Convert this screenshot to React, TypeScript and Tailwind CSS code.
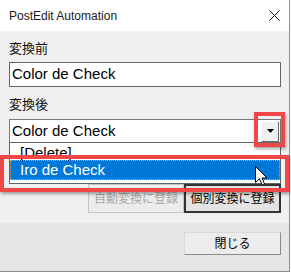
const ui = '"Liberation Sans", "Noto Sans CJK JP", sans-serif';

function Cursor() {
  return (
    <svg width="13" height="21" viewBox="0 0 13 21" className="absolute left-[255px] top-[166px]">
      <path
        d="M0.5 0.5 L0.5 16.5 L4.5 12.8 L7.2 19.2 L9.6 18.2 L7 12 L12 12 Z"
        fill="white"
        stroke="black"
        strokeWidth="1"
        strokeLinejoin="miter"
      />
    </svg>
  );
}

export default function App() {
  return (
    <div className="h-[273px] w-[291px] overflow-hidden bg-white" style={{ fontFamily: ui }}>
      <div className="relative flex h-[272px] w-[290px] flex-col border-r border-b border-[#8c8c8c] bg-[#f0f0f0]">
        {/* title bar */}
        <div className="flex h-[31px] items-center justify-between bg-white pl-[9px] pr-[9px]">
          <span className="text-[12px] text-[#1a1a1a]">PostEdit Automation</span>
          <svg width="11" height="11" viewBox="0 0 11 11">
            <path d="M0.5 0.5 L10.5 10.5 M10.5 0.5 L0.5 10.5" stroke="#111" strokeWidth="1" />
          </svg>
        </div>

        <div className="flex flex-col pb-[10px] pl-[9px] pr-[8px]">
          <div className="mt-[9px] h-[18px] text-[13px] leading-[18px] text-[#111]">変換前</div>
          <div className="mt-[4px] flex h-[25px] w-[272px] items-center border border-[#646464] bg-white pl-[2px] text-[15px] text-black">
            Color de Check
          </div>

          <div className="mt-[9px] h-[18px] text-[13px] leading-[18px] text-[#111]">変換後</div>
          <div className="mt-[5px] flex h-[24px] w-[272px] items-center justify-between border border-[#7a7a7a] bg-white pl-[2px] pr-[1px] text-[15px] text-black">
            <span>Color de Check</span>
            <div className="flex h-[21px] w-[18px] items-center justify-center border border-t-white border-l-white border-r-[#696969] border-b-[#696969] bg-[#f0f0f0]">
              <svg width="7" height="4" viewBox="0 0 7 4">
                <path d="M0 0 H7 L3.5 4 Z" fill="black" />
              </svg>
            </div>
          </div>

          <div className="mt-[41px] flex justify-end">
            <div className="flex h-[29px] w-[96px] items-center justify-center border border-[#c6c6c6] bg-[#ececec] text-[12px] text-[#a6a6a6]">
              自動変換に登録
            </div>
            <div className="flex h-[29px] w-[97px] items-center justify-center border-2 border-[#333] bg-[#e4e4e4] text-[12px] text-black">
              個別変換に登録
            </div>
          </div>
        </div>

        <div className="flex flex-1 justify-end bg-[#e6e6e6] pr-[8px] pt-[9px]">
          <div className="flex h-[23px] w-[97px] items-center justify-center border border-t-[#d8d8d8] border-l-[#d8d8d8] border-r-[#8a8a8a] border-b-[#8a8a8a] bg-[#ececec] text-[12px] text-black">
            閉じる
          </div>
        </div>

        {/* dropdown list */}
        <div className="absolute left-[9px] top-[142px] h-[42px] w-[272px] border border-[#646464] bg-white text-[15px]">
          <div className="h-[17px] pl-[10px] pt-[1px] leading-[17px] text-black">[Delete]</div>
          <div className="flex h-[20px] items-center bg-[#0078d7] pl-[10px] text-white outline-1 outline-dotted outline-offset-[-1px] outline-[#e8a040]">
            Iro de Check
          </div>
        </div>

        {/* annotation boxes */}
        <div className="absolute left-0 top-[155px] h-[37px] w-[289px] border-4 border-[#f04848] shadow-[1px_2px_3px_rgba(0,0,0,0.35)]" />
        <div className="absolute left-[254px] top-[112px] h-[35px] w-[31px] border-4 border-[#f04848] shadow-[1px_2px_3px_rgba(0,0,0,0.35)]" />

        <Cursor />
      </div>
    </div>
  );
}
